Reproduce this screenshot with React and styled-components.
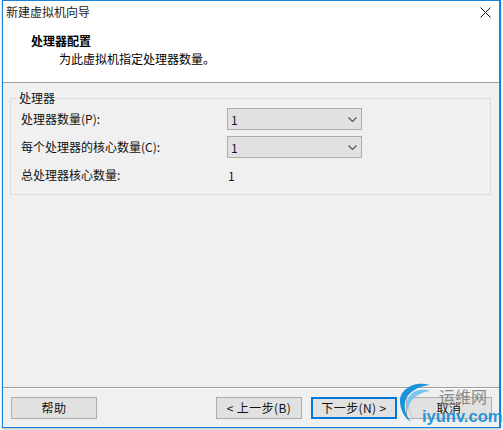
import React from 'react';
import styled, { createGlobalStyle } from 'styled-components';

const GlobalStyle = createGlobalStyle`
  html, body {
    margin: 0;
    padding: 0;
    background: #fff;
  }
  body {
    font-family: "Noto Sans CJK SC", "Liberation Sans", sans-serif;
    font-size: 12px;
    color: #000;
  }
`;

const Page = styled.div`
  position: relative;
  width: 503px;
  height: 430px;
  padding: 0 2px 2px 2px;
  box-sizing: border-box;
  overflow: hidden;
`;

const Window = styled.div`
  display: flex;
  flex-direction: column;
  height: 100%;
  box-sizing: border-box;
  border: 1px solid #1883d7;
  border-right-width: 2px;
  background: #f0f0f0;
  box-shadow: 0 1px 2px rgba(0, 0, 0, 0.3);
`;

const Banner = styled.div`
  height: 81px;
  flex: none;
  background: #fff;
  border-bottom: 1px solid #a0a0a0;
`;

const TitleBar = styled.div`
  display: flex;
  align-items: center;
  justify-content: space-between;
  height: 22px;
  padding: 0 8px 0 3px;
  line-height: 22px;
  color: #222;
`;

const CloseButton = styled.svg`
  width: 11px;
  height: 11px;
  display: block;
`;

const Heading = styled.div`
  margin: 9px 0 0 28px;
  font-weight: 700;
  line-height: 17px;
`;

const Subheading = styled.div`
  margin: 1px 0 0 56px;
  line-height: 17px;
`;

const Body = styled.div`
  flex: 1;
  padding: 8px 8px 0 7px;
`;

const GroupBox = styled.fieldset`
  margin: 0;
  padding: 3px 0 0 10px;
  height: 104px;
  box-sizing: border-box;
  border: 1px solid #dcdcdc;
  min-inline-size: 0;
`;

const Legend = styled.legend`
  margin-left: -3px;
  padding: 0 1px;
  line-height: 14px;
  color: #111;
`;

const Rows = styled.div`
  display: grid;
  grid-template-columns: 206px 135px;
  grid-auto-rows: 22px;
  row-gap: 6px;
  align-items: center;
`;

const Label = styled.div`
  line-height: 16px;
  color: #111;
`;

const Select = styled.div`
  display: flex;
  align-items: center;
  justify-content: space-between;
  height: 22px;
  box-sizing: border-box;
  padding: 0 3px;
  background: #e1e1e1;
  border: 1px solid #adadad;
  color: #1a1040;
`;

const Chevron = styled.svg`
  width: 9px;
  height: 5px;
  display: block;
  margin-right: 1px;
`;

const Value = styled.div`
  margin-left: 1px;
  color: #1a1040;
`;

const Footer = styled.div`
  flex: none;
  height: 40px;
  box-sizing: border-box;
  display: flex;
  align-items: flex-start;
  padding: 9px 0 0 8px;
  border-top: 1px solid #a0a0a0;
  box-shadow: inset 0 1px 0 #fff;
`;

const Button = styled.button`
  width: 86px;
  height: 22px;
  margin: 0 ${p => p.$gap || 0}px 0 0;
  padding: 0;
  box-sizing: border-box;
  font: inherit;
  letter-spacing: 0.4px;
  line-height: 18px;
  color: #111;
  background: #e1e1e1;
  border: ${p => (p.$primary ? '2px solid #0078d7' : '1px solid #adadad')};
`;

const Watermark = styled.div`
  position: absolute;
  left: 398px;
  top: 382px;
  width: 105px;
  height: 48px;
  pointer-events: none;
`;

const Swoosh = styled.svg`
  position: absolute;
  left: 0;
  top: 0;
  width: 48px;
  height: 48px;
`;

const MarkName = styled.div`
  position: absolute;
  left: 41px;
  top: 5px;
  font-size: 16px;
  line-height: 18px;
  color: #8a8a8a;
`;

const MarkUrl = styled.div`
  position: absolute;
  left: 24px;
  top: 25px;
  font-family: "Liberation Sans", sans-serif;
  font-size: 16.5px;
  font-weight: 700;
  line-height: 18px;
  color: #1590d8;
  opacity: 0.92;
`;

export default function App() {
  return (
    <Page>
      <GlobalStyle />
      <Window>
        <Banner>
          <TitleBar>
            <span>新建虚拟机向导</span>
            <CloseButton viewBox="0 0 11 11">
              <path d="M0.5 0.5 L10.5 10.5 M10.5 0.5 L0.5 10.5" stroke="#111" strokeWidth="1" fill="none" />
            </CloseButton>
          </TitleBar>
          <Heading>处理器配置</Heading>
          <Subheading>为此虚拟机指定处理器数量。</Subheading>
        </Banner>
        <Body>
          <GroupBox>
            <Legend>处理器</Legend>
            <Rows>
              <Label>处理器数量(P):</Label>
              <Select>
                <span>1</span>
                <Chevron viewBox="0 0 9 5">
                  <path d="M0.5 0.5 L4.500 4.500 L8.500 0.5" stroke="#555" strokeWidth="1.1" fill="none" />
                </Chevron>
              </Select>
              <Label>每个处理器的核心数量(C):</Label>
              <Select>
                <span>1</span>
                <Chevron viewBox="0 0 9 5">
                  <path d="M0.5 0.5 L4.500 4.500 L8.500 0.5" stroke="#555" strokeWidth="1.1" fill="none" />
                </Chevron>
              </Select>
              <Label>总处理器核心数量:</Label>
              <Value>1</Value>
            </Rows>
          </GroupBox>
        </Body>
        <Footer>
          <Button $gap={119}>帮助</Button>
          <Button $gap={9}>&lt; 上一步(B)</Button>
          <Button $gap={9} $primary>下一步(N) &gt;</Button>
          <Button>取消</Button>
        </Footer>
      </Window>
      <Watermark>
        <Swoosh viewBox="0 0 48 48">
          <path d="M32 3 C16 -2 1 8 2 20 C2.500 29 7 36 13 40 C9 35 6 28 7 21 C8 11 20 4 32 3 Z" fill="#1a93dc" />
          <path d="M32 9 C22 5 11 10 9 20 C8.500 24 9 27 10 29 C10 20 18 11 32 9 Z" fill="#7cc6ee" />
          <path d="M11 25 C11 30 13 34 16 37" stroke="#c8c8c8" strokeWidth="1" fill="none" />
        </Swoosh>
        <MarkName>运维网</MarkName>
        <MarkUrl>iyunv.com</MarkUrl>
      </Watermark>
    </Page>
  );
}
